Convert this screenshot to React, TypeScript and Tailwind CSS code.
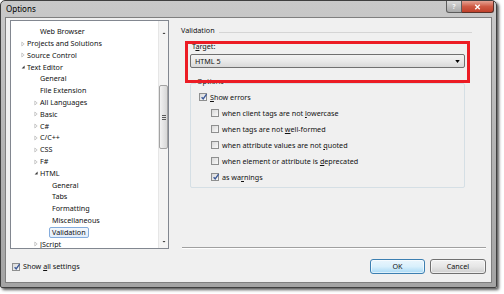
import React from 'react';

type Node = { label: string; level: 1 | 2 | 3; arrow?: 'open' | 'closed'; selected?: boolean };

const tree: Node[] = [
  { label: 'Web Browser', level: 2 },
  { label: 'Projects and Solutions', level: 1, arrow: 'closed' },
  { label: 'Source Control', level: 1, arrow: 'closed' },
  { label: 'Text Editor', level: 1, arrow: 'open' },
  { label: 'General', level: 2 },
  { label: 'File Extension', level: 2 },
  { label: 'All Languages', level: 2, arrow: 'closed' },
  { label: 'Basic', level: 2, arrow: 'closed' },
  { label: 'C#', level: 2, arrow: 'closed' },
  { label: 'C/C++', level: 2, arrow: 'closed' },
  { label: 'CSS', level: 2, arrow: 'closed' },
  { label: 'F#', level: 2, arrow: 'closed' },
  { label: 'HTML', level: 2, arrow: 'open' },
  { label: 'General', level: 3 },
  { label: 'Tabs', level: 3 },
  { label: 'Formatting', level: 3 },
  { label: 'Miscellaneous', level: 3 },
  { label: 'Validation', level: 3, selected: true },
  { label: 'JScript', level: 2, arrow: 'closed' },
];

const indent = { 1: 'w-[8px]', 2: 'w-[21px]', 3: 'w-[33px]' };

function Arrow({ kind }: { kind?: 'open' | 'closed' }) {
  if (kind === 'closed')
    return (
      <svg viewBox="0 0 8 8" className="w-[8px] h-[8px] shrink-0">
        <path d="M2.8 2 L5.2 4 L2.8 6 Z" fill="none" stroke="#b4b4b4" strokeWidth="0.7" />
      </svg>
    );
  if (kind === 'open')
    return (
      <svg viewBox="0 0 8 8" className="w-[8px] h-[8px] shrink-0">
        <path d="M5.6 2.6 L5.6 5.6 L2.6 5.6 Z" fill="#3a3a3a" />
      </svg>
    );
  return <span className="w-[8px] shrink-0" />;
}

function Check({ on }: { on?: boolean }) {
  return (
    <span className="relative w-[8px] h-[8px] shrink-0 border border-[#8e8f8f] bg-gradient-to-br from-[#d8d8d8] to-[#fafafa]">
      {on && (
        <svg viewBox="0 0 8 8" className="absolute w-[8px] h-[8px] -top-[1px] -left-[0.5px]">
          <path d="M1.6 4.2 L3.2 6 L6.6 1.2" stroke="#3d5a98" strokeWidth="1.4" fill="none" />
        </svg>
      )}
    </span>
  );
}

function CheckRow({ on, sub, children }: { on?: boolean; sub?: boolean; children: React.ReactNode }) {
  return (
    <div className={`h-[16px] flex items-center gap-[3px] ${sub ? 'pl-[20px]' : 'pl-[8px]'}`}>
      <Check on={on} />
      <span>{children}</span>
    </div>
  );
}

function u(s: string) {
  return <span className="underline underline-offset-[1px]">{s}</span>;
}

export default function App() {
  return (
    <div className="w-[504px] h-[294px] bg-white font-['Noto_Sans',sans-serif] text-[7.2px] text-[#111] leading-none">
      <div className="w-[497px] h-[288px] flex flex-col rounded-t-[5px] rounded-b-[2px] border border-[#3f3f3f] bg-gradient-to-b from-[#c9c9c9] via-[#b4b4b4] to-[#a4a4a4] shadow-[2px_2px_3px_rgba(0,0,0,0.65)]">
        {/* Title bar */}
        <div className="h-[16px] flex items-start shrink-0">
          <span className="pl-[5px] pt-[4px] text-[8px] text-black">Options</span>
          <div className="ml-auto mr-[2px] flex">
            <div className="w-[16px] h-[12px] rounded-bl-[3px] border border-t-0 border-[#5c5c5c] bg-gradient-to-b from-[#d8d8d8] to-[#a9a9a9] flex items-center justify-center text-[7px] text-[#f4f4f4] font-bold">
              ?
            </div>
            <div className="w-[32px] h-[12px] rounded-br-[3px] border border-l-0 border-t-0 border-[#5c3028] bg-gradient-to-b from-[#e5a293] via-[#cf5a44] to-[#c0402a] flex items-center justify-center">
              <svg viewBox="0 0 8 8" className="w-[7px] h-[6px]">
                <path d="M1 1 L7 7 M7 1 L1 7" stroke="#fff" strokeWidth="1.8" />
              </svg>
            </div>
          </div>
        </div>

        {/* Client area */}
        <div className="flex-1 mx-[4px] mb-[4px] border border-[#7f7f7f] bg-[#f0f0f0] flex flex-col">
          <div className="flex pt-[2px] pl-[4px] pr-[5px]">
            {/* Tree */}
            <div className="w-[159px] h-[229px] border border-[#828790] bg-white flex overflow-hidden">
              <div className="flex-1 pt-[5px] overflow-hidden">
                {tree.map((n, i) => (
                  <div key={i} className="h-[11.8px] flex items-center">
                    <span className={`${indent[n.level]} shrink-0`} />
                    <Arrow kind={n.arrow} />
                    {n.selected ? (
                      <span className="-ml-[3px] px-[2px] h-[11px] flex items-center border border-[#84acdd] rounded-[2px] bg-gradient-to-b from-[#f4f8fd] to-[#e2edfb]">
                        {n.label}
                      </span>
                    ) : (
                      <span>{n.label}</span>
                    )}
                  </div>
                ))}
              </div>
              {/* Scrollbar */}
              <div className="w-[10px] h-full bg-[#f4f4f4] border-l border-[#e6e6e6] flex flex-col items-center">
                <svg viewBox="0 0 8 8" className="w-[8px] h-[8px] mt-[8px]">
                  <path d="M2.5 5 L4 3.5 L5.5 5 Z" fill="#333" />
                </svg>
                <div className="mt-[48px] w-[9px] h-[64px] rounded-[2px] border border-[#a3a3a3] bg-gradient-to-r from-[#f2f2f2] to-[#d7d7d7] flex flex-col items-center justify-center gap-[1px]">
                  <span className="w-[4px] h-[1px] bg-[#5a5a5a]" />
                  <span className="w-[4px] h-[1px] bg-[#5a5a5a]" />
                  <span className="w-[4px] h-[1px] bg-[#5a5a5a]" />
                </div>
                <svg viewBox="0 0 8 8" className="w-[8px] h-[8px] mt-auto mb-[2px]">
                  <path d="M2.5 3 L4 4.5 L5.5 3 Z" fill="#333" />
                </svg>
              </div>
            </div>

            {/* Right pane */}
            <div className="relative flex-1 ml-[12px] h-[229px] flex flex-col">
              <div className="mt-[7px] h-[8px] flex items-center">
                <span>Validation</span>
                <span className="flex-1 ml-[4px] mr-[14px] mt-[3px] border-t border-[#d5d5d5]" />
              </div>
              <div className="mt-[8px] pl-[11px]">
                T{u('a')}rget:
              </div>
              <div className="mt-[4px] ml-[9px] w-[275px] h-[14px] rounded-[2px] border border-[#707070] bg-gradient-to-b from-[#f3f3f3] via-[#e9e9e9] to-[#d9d9d9] flex items-center pl-[4px] pr-[4px]">
                <span>HTML 5</span>
                <svg viewBox="0 0 6 4" className="ml-auto w-[5px] h-[3px]">
                  <path d="M0 0 L6 0 L3 4 Z" fill="#000" />
                </svg>
              </div>
              <div className="relative mt-[15px] ml-[9px] w-[275px] h-[105px] border border-[#d5dfe5] rounded-[2px] pt-[5px]">
                <span className="absolute -top-[6px] left-[5px] px-[1px] bg-[#f0f0f0]">Options</span>
                <CheckRow on>{u('S')}how errors</CheckRow>
                <CheckRow sub>when client tags are not {u('l')}owercase</CheckRow>
                <CheckRow sub>when tags are not {u('w')}ell-formed</CheckRow>
                <CheckRow sub>when attribute values are not {u('q')}uoted</CheckRow>
                <CheckRow sub>when element or attribute is {u('d')}eprecated</CheckRow>
                <CheckRow sub on>as wa{u('r')}nings</CheckRow>
              </div>
              <div className="mt-auto ml-[1px] border-t border-[#a0a0a0] border-b-white border-b" />
              {/* Red annotation box */}
              <div className="absolute left-[4px] top-[21px] w-[285px] h-[42px] border-[3px] border-[#ec1c24]" />
            </div>
          </div>

          {/* Bottom row */}
          <div className="mt-[10px] h-[15px] flex items-center pl-[6px] pr-[5px]">
            <div className="flex items-center gap-[3px]">
              <Check on />
              <span>Show {u('a')}ll settings</span>
            </div>
            <div className="ml-auto flex gap-[5px]">
              <button className="w-[55px] h-[15px] rounded-[3px] border border-[#3c7fb1] bg-gradient-to-b from-[#eaf6fd] via-[#d9f0fc] to-[#a7d9f5] shadow-[inset_0_0_0_1px_rgba(255,255,255,0.6)] text-[7.2px] leading-none">
                OK
              </button>
              <button className="w-[56px] h-[15px] rounded-[3px] border border-[#707070] bg-gradient-to-b from-[#f2f2f2] via-[#e6e6e6] to-[#cfcfcf] shadow-[inset_0_0_0_1px_rgba(255,255,255,0.6)] text-[7.2px] leading-none">
                Cancel
              </button>
            </div>
          </div>
        </div>
      </div>
    </div>
  );
}
